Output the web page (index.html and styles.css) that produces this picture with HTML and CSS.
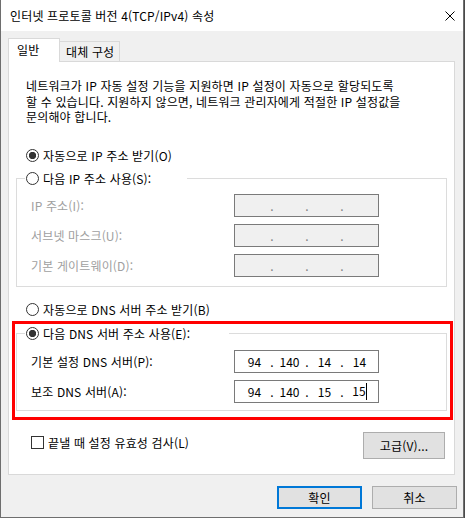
FILE: index.html
```html
<!DOCTYPE html>
<html lang="ko">
<head>
<meta charset="utf-8">
<title>인터넷 프로토콜 버전 4(TCP/IPv4) 속성</title>
<link rel="stylesheet" href="styles.css">
</head>
<body>
<div class="window">
  <div class="titlebar">
    <span class="title">인터넷 프로토콜 버전 4(TCP/IPv4) 속성</span>
    <svg class="close" width="10" height="10" viewBox="0 0 10 10"><path d="M0.5 0.5 L9.5 9.5 M9.5 0.5 L0.5 9.5" stroke="#000" stroke-width="1" fill="none"/></svg>
  </div>
  <div class="client">
    <div class="tabs">
      <div class="tab active">일반</div>
      <div class="tab">대체 구성</div>
    </div>
    <div class="panel">
      <p class="desc">네트워크가 IP 자동 설정 기능을 지원하면 IP 설정이 자동으로 할당되도록<br>할 수 있습니다. 지원하지 않으면, 네트워크 관리자에게 적절한 IP 설정값을<br>문의해야 합니다.</p>

      <div class="radio standalone first"><span class="dot checked"></span>자동으로 IP 주소 받기(O)</div>

      <fieldset class="group group-ip">
        <legend class="legend legend-ip"><span class="radio"><span class="dot"></span>다음 IP 주소 사용(S):</span></legend>
        <div class="rows">
          <span class="lbl disabled">IP 주소(I):</span>
          <div class="ipbox off"><span class="seg"></span><span class="sep">.</span><span class="seg"></span><span class="sep">.</span><span class="seg"></span><span class="sep">.</span><span class="seg"></span></div>
          <span class="lbl disabled">서브넷 마스크(U):</span>
          <div class="ipbox off"><span class="seg"></span><span class="sep">.</span><span class="seg"></span><span class="sep">.</span><span class="seg"></span><span class="sep">.</span><span class="seg"></span></div>
          <span class="lbl disabled">기본 게이트웨이(D):</span>
          <div class="ipbox off"><span class="seg"></span><span class="sep">.</span><span class="seg"></span><span class="sep">.</span><span class="seg"></span><span class="sep">.</span><span class="seg"></span></div>
        </div>
      </fieldset>

      <div class="radio standalone dns-auto"><span class="dot"></span>자동으로 DNS 서버 주소 받기(B)</div>

      <div class="highlight">
        <fieldset class="group group-dns">
          <legend class="legend legend-dns"><span class="radio"><span class="dot checked"></span>다음 DNS 서버 주소 사용(E):</span></legend>
          <div class="rows">
            <span class="lbl">기본 설정 DNS 서버(P):</span>
            <div class="ipbox"><span class="seg">94</span><span class="sep">.</span><span class="seg">140</span><span class="sep">.</span><span class="seg">14</span><span class="sep">.</span><span class="seg">14</span></div>
            <span class="lbl">보조 DNS 서버(A):</span>
            <div class="ipbox"><span class="seg">94</span><span class="sep">.</span><span class="seg">140</span><span class="sep">.</span><span class="seg">15</span><span class="sep">.</span><span class="seg">15<span class="caret"></span></span></div>
          </div>
        </fieldset>
      </div>

      <div class="bottom-row">
        <div class="check"><span class="box"></span>끝낼 때 설정 유효성 검사(L)</div>
        <div class="btn advanced">고급(V)...</div>
      </div>
    </div>
    <div class="buttons">
      <div class="btn default">확인</div>
      <div class="btn">취소</div>
    </div>
  </div>
</div>
</body>
</html>
```
FILE: styles.css
```css
* { box-sizing: border-box; }
html, body { margin: 0; padding: 0; }
body {
  width: 465px;
  height: 518px;
  overflow: hidden;
  background: #4a4a4a;
  font-family: "Noto Sans CJK KR", "Noto Sans", sans-serif;
  font-size: 12px;
  letter-spacing: 0.15px;
  color: #000;
}
.window {
  width: 464px;
  height: 518px;
  background: #f0f0f0;
  border: 1px solid #6e6e6e;
  border-top: none;
  display: flex;
  flex-direction: column;
}
.titlebar {
  height: 31px;
  flex: none;
  background: #fff;
  display: flex;
  align-items: center;
  justify-content: space-between;
  padding: 0 8px 0 9px;
}
.title { line-height: 15px; white-space: nowrap; }
.close { display: block; }

.client { flex: 1; padding: 7px 7px 0 7px; }

.tabs {
  display: flex;
  align-items: flex-end;
  height: 24px;
  margin-bottom: -1px;
  position: relative;
  z-index: 1;
}
.tab {
  height: 20px;
  width: 61px;
  margin-left: -1px;
  margin-bottom: 1px;
  border: 1px solid #d9d9d9;
  border-bottom: none;
  background: #f0f0f0;
  padding: 2px 0 0 6px;
  line-height: 15px;
  white-space: nowrap;
}
.tab.active {
  height: 24px;
  width: 52px;
  margin-left: 0;
  margin-bottom: 0;
  background: #fff;
  padding: 3px 0 0 8px;
  position: relative;
  z-index: 2;
}

.panel {
  width: 447px;
  height: 414px;
  background: #fff;
  border: 1px solid #d9d9d9;
}
.desc {
  margin: 0;
  padding: 16px 0 0 17px;
  line-height: 15.5px;
  white-space: nowrap;
}

.radio {
  display: flex;
  align-items: center;
  height: 15px;
  line-height: 15px;
  white-space: nowrap;
}
.radio.standalone { padding-left: 17px; }
.radio.first { margin-top: 23px; }
.radio.dns-auto { margin-top: 15px; }
.dot {
  flex: none;
  width: 13px;
  height: 13px;
  margin-right: 4px;
  border: 1px solid #333;
  border-radius: 50%;
  background: #fff;
}
.dot.checked { background: radial-gradient(circle, #333 0, #333 3.4px, #fff 3.9px); }

.group {
  width: 431px;
  margin: 8px 0 0 7px;
  padding: 8px 0 9px 0;
  border: 1px solid #dcdcdc;
  min-inline-size: 0;
}
.legend { margin-left: 8px; padding: 0 0 0 1px; height: 15px; }
.legend-ip { width: 162px; }
.legend-dns { width: 204px; }

.rows {
  display: grid;
  grid-template-columns: 203px 145px;
  row-gap: 7px;
  align-items: center;
  padding-left: 14px;
}
.lbl { line-height: 15px; white-space: nowrap; }
.lbl.disabled { color: #a0a0a0; }

.ipbox {
  height: 23px;
  border: 1px solid #7a7a7a;
  background: #fff;
  display: flex;
  align-items: center;
  padding-left: 4px;
  line-height: 15px;
  letter-spacing: 0;
}
.ipbox.off { background: #f0f0f0; color: #808080; }
.seg { width: 31px; text-align: center; white-space: nowrap; }
.sep { width: 4px; text-align: center; }
.caret {
  display: inline-block;
  width: 1px;
  height: 17px;
  background: #000;
  vertical-align: -4px;
}

.highlight {
  width: 441px;
  margin: 4px 0 0 3px;
  border: 3px solid #ff0000;
  padding: 2px 0 6px 1px;
}
.group-dns { margin: 0; padding: 9px 0 7px 0; }

.bottom-row {
  display: flex;
  justify-content: space-between;
  align-items: flex-start;
  margin-top: 12px;
  padding: 0 9px 0 22px;
}
.check {
  display: flex;
  align-items: center;
  height: 15px;
  line-height: 15px;
  margin-top: 3px;
  white-space: nowrap;
}
.box {
  flex: none;
  width: 13px;
  height: 13px;
  margin-right: 4px;
  border: 1px solid #333;
  background: #fff;
}

.btn {
  width: 85px;
  height: 23px;
  background: #e1e1e1;
  border: 1px solid #adadad;
  display: flex;
  align-items: center;
  justify-content: center;
  line-height: 15px;
  white-space: nowrap;
}
.btn.advanced { width: 82px; height: 27px; }
.btn.default { border: 2px solid #0078d7; }

.buttons {
  display: flex;
  justify-content: flex-end;
  gap: 10px;
  margin-top: 11px;
  width: 449px;
}
```
